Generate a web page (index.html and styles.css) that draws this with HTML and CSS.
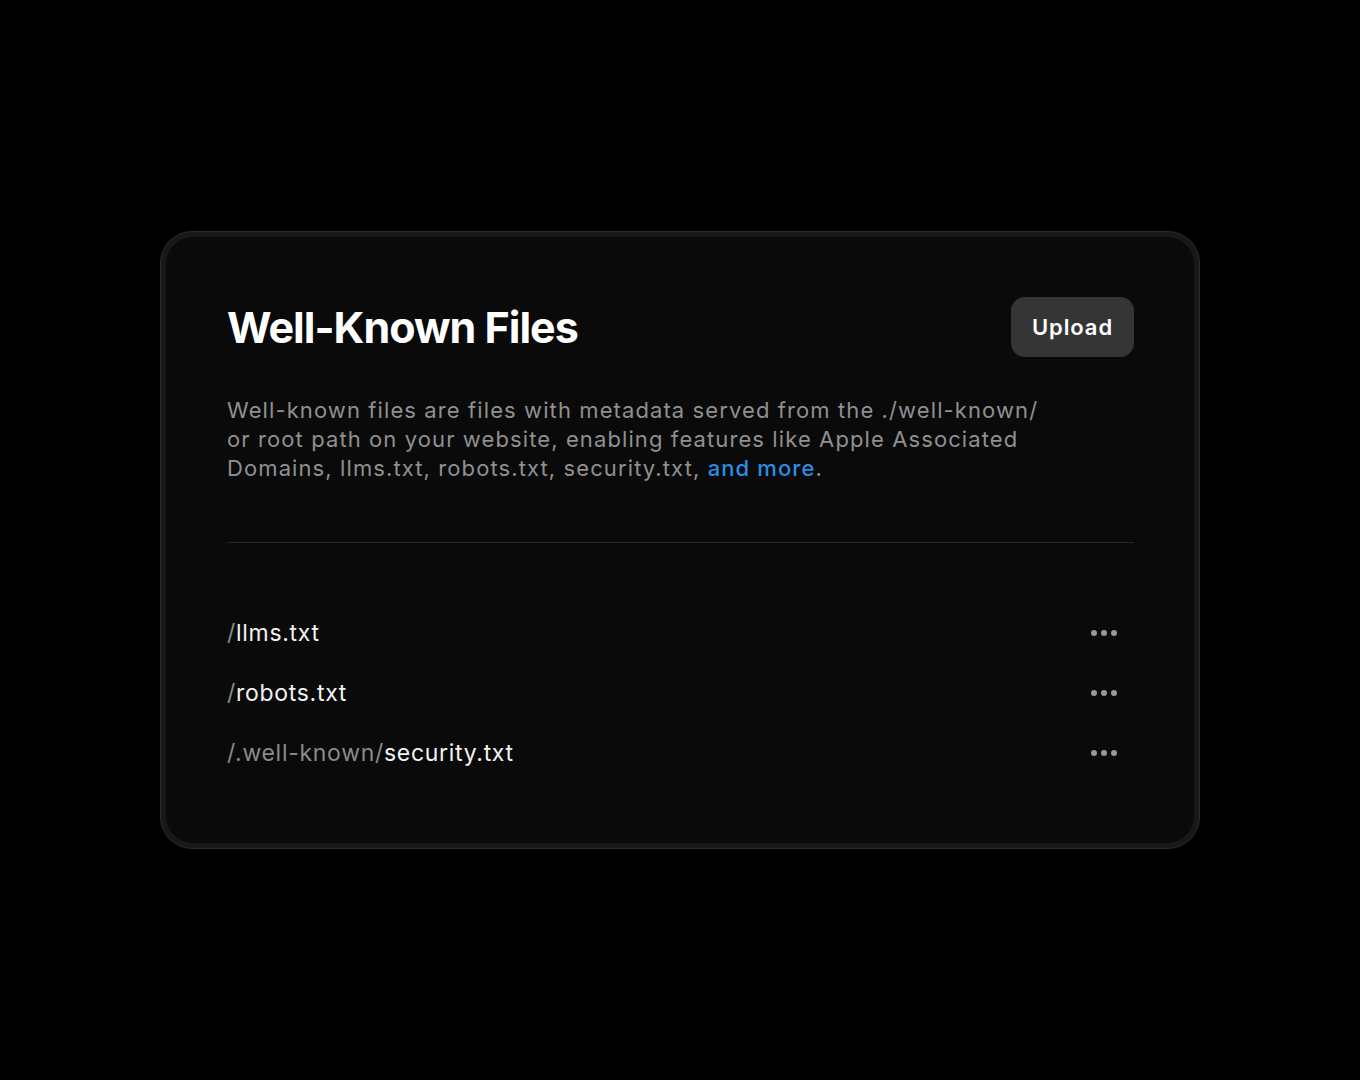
FILE: index.html
```html
<!DOCTYPE html>
<html lang="en">
<head>
<meta charset="utf-8">
<title>Well-Known Files</title>
<link rel="stylesheet" href="styles.css">
</head>
<body>
<main class="stage">
  <section class="frame">
    <div class="card">
      <header class="card-head">
        <h1 class="title">Well-Known Files</h1>
        <button class="upload" type="button">Upload</button>
      </header>
      <p class="desc">Well-known files are files with metadata served from the ./well-known/ or root path on your website, enabling features like Apple Associated Domains, llms.txt, robots.txt, security.txt, <a class="link" href="#">and more</a>.</p>
      <hr class="divider">
      <ul class="files">
        <li class="file">
          <span class="path"><span class="dim">/</span>llms.txt</span>
          <button class="more" type="button" aria-label="More"><i></i><i></i><i></i></button>
        </li>
        <li class="file">
          <span class="path"><span class="dim">/</span>robots.txt</span>
          <button class="more" type="button" aria-label="More"><i></i><i></i><i></i></button>
        </li>
        <li class="file">
          <span class="path"><span class="dim">/.well-known/</span>security.txt</span>
          <button class="more" type="button" aria-label="More"><i></i><i></i><i></i></button>
        </li>
      </ul>
    </div>
  </section>
</main>
</body>
</html>
```
FILE: styles.css
```css
* { box-sizing: border-box; }
html, body {
  margin: 0;
  padding: 0;
  background: #000;
}
body {
  font-family: Inter, "Noto Sans", sans-serif;
  color: #fff;
  width: 1360px;
  height: 1080px;
}
.stage {
  display: flex;
  justify-content: center;
  padding-top: 231px;
}
.frame {
  width: 1040px;
  padding: 5px;
  border-radius: 32px;
  background: #181818;
  border: 1px solid #2b2b2b;
}
.card {
  background: #0a0a0a;
  border-radius: 27px;
  padding: 60px 60px 60px 61px;
}
.card-head {
  display: flex;
  align-items: center;
  justify-content: space-between;
  height: 60px;
}
.title {
  margin: 0;
  font-size: 43px;
  font-weight: 700;
  letter-spacing: -1px;
  line-height: 1;
  color: #fff;
}
.upload {
  width: 123px;
  height: 60px;
  border: 0;
  border-radius: 14px;
  background: #353535;
  color: #fff;
  font-family: inherit;
  font-size: 22px;
  font-weight: 600;
  letter-spacing: 0.9px;
  padding: 0;
}
.desc {
  margin: 39px 0 0;
  max-width: 825px;
  font-size: 22px;
  line-height: 29px;
  letter-spacing: 1.1px;
  color: #909090;
}
.link {
  color: #2b8de3;
  font-weight: 500;
  text-decoration: none;
}
.divider {
  margin: 59px 0 0;
  border: 0;
  height: 1px;
  background: #242424;
}
.files {
  list-style: none;
  margin: 60px 0 0;
  padding: 0;
}
.file {
  height: 60px;
  display: flex;
  align-items: center;
  justify-content: space-between;
}
.path {
  font-size: 23px;
  letter-spacing: 0.7px;
  color: #f2f2f2;
}
.dim {
  color: #8a8a8a;
}
.more {
  display: flex;
  gap: 4px;
  align-items: center;
  background: none;
  border: 0;
  padding: 0 17px 0 0;
}
.more i {
  display: block;
  width: 6px;
  height: 6px;
  border-radius: 50%;
  background: #9a9a9a;
}
```
